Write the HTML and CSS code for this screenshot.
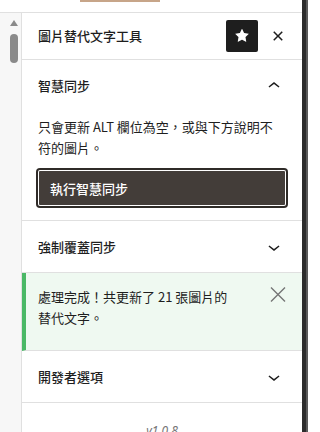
FILE: index.html
```html
<!DOCTYPE html>
<html lang="zh-Hant">
<head>
<meta charset="utf-8">
<title>圖片替代文字工具</title>
<link rel="stylesheet" href="styles.css">
</head>
<body>
<div class="app">
  <div class="left">
    <div class="topbar"><div class="tab-accent"></div></div>
    <div class="row">
      <div class="gutter">
        <div class="arrow"></div>
        <div class="thumb"></div>
      </div>
      <div class="panel">
        <div class="header">
          <h2 class="title">圖片替代文字工具</h2>
          <button class="icon-btn pinned" aria-label="固定">
            <svg width="24" height="24" viewBox="0 0 24 24"><path d="M11.776 4.454a.25.25 0 01.448 0l2.069 4.192a.25.25 0 00.188.137l4.626.672a.25.25 0 01.139.426l-3.348 3.263a.25.25 0 00-.072.222l.79 4.607a.25.25 0 01-.362.263l-4.138-2.175a.25.25 0 00-.232 0l-4.138 2.175a.25.25 0 01-.363-.263l.79-4.607a.25.25 0 00-.071-.222L4.754 9.881a.25.25 0 01.139-.426l4.626-.672a.25.25 0 00.188-.137l2.069-4.192z"/></svg>
          </button>
          <button class="icon-btn close" aria-label="關閉">
            <svg width="24" height="24" viewBox="0 0 24 24"><path d="M12 13.06l3.712 3.713 1.061-1.06L13.061 12l3.712-3.712-1.06-1.06L12 10.938 8.288 7.227l-1.061 1.06L10.939 12l-3.712 3.712 1.06 1.061L12 13.061z"/></svg>
          </button>
        </div>

        <section class="section">
          <div class="sec-head first">
            <span>智慧同步</span>
            <svg class="chev" width="24" height="24" viewBox="0 0 24 24"><path d="M6.5 12.4L12 8l5.5 4.4-.9 1.2L12 10l-4.6 3.6-.9-1.2z"/></svg>
          </div>
          <div class="sec-body">
            <p class="desc">只會更新 ALT 欄位為空，或與下方說明不符的圖片。</p>
            <button class="primary">執行智慧同步</button>
          </div>
        </section>

        <section class="section">
          <div class="sec-head">
            <span>強制覆蓋同步</span>
            <svg class="chev" width="24" height="24" viewBox="0 0 24 24"><path d="M17.5 11.6L12 16l-5.5-4.4.9-1.2L12 14l4.6-3.6.9 1.2z"/></svg>
          </div>
        </section>

        <div class="notice">
          <p class="notice-text">處理完成！共更新了 21 張圖片的替代文字。</p>
          <button class="dismiss" aria-label="關閉通知">
            <svg width="16" height="17" viewBox="0 0 16 17"><path d="M1 1.5L15 15.5M15 1.5L1 15.5" stroke="#757575" stroke-width="1.4" fill="none"/></svg>
          </button>
        </div>

        <section class="section">
          <div class="sec-head">
            <span>開發者選項</span>
            <svg class="chev" width="24" height="24" viewBox="0 0 24 24"><path d="M17.5 11.6L12 16l-5.5-4.4.9-1.2L12 14l4.6-3.6.9 1.2z"/></svg>
          </div>
        </section>

        <div class="footer">v1.0.8</div>
      </div>
    </div>
  </div>
  <div class="edge"></div>
</div>
</body>
</html>
```

FILE: styles.css
```css
* { box-sizing: border-box; }

html, body {
  margin: 0;
  padding: 0;
  height: 432px;
  overflow: hidden;
  background: #fff;
}

body {
  font-family: "Noto Sans CJK TC", "Noto Sans", sans-serif;
  font-size: 13px;
  color: #1e1e1e;
}

.app {
  display: flex;
  width: 308px;
  height: 432px;
}

.left {
  width: 302px;
  flex: none;
  display: flex;
  flex-direction: column;
}

.topbar {
  flex: none;
  height: 13px;
  border-bottom: 1px solid #e0e0e0;
  display: flex;
}

.tab-accent {
  margin-left: 80px;
  width: 80px;
  height: 2px;
  background: #c7a589;
}

.row {
  flex: 1;
  display: flex;
  min-height: 0;
  overflow: hidden;
}

.gutter {
  width: 22px;
  flex: none;
  background: #f7f7f7;
  border-right: 1px solid #e0e0e0;
  padding-left: 10px;
  padding-top: 7px;
  display: flex;
  flex-direction: column;
}

.arrow {
  flex: none;
  width: 0;
  height: 0;
  border-left: 4px solid transparent;
  border-right: 4px solid transparent;
  border-bottom: 6px solid #8a8a8a;
}

.thumb {
  flex: none;
  margin-top: 8px;
  width: 8px;
  height: 29px;
  border-radius: 4px;
  background: #8a8a8a;
}

.panel {
  width: 280px;
  flex: none;
  display: flex;
  flex-direction: column;
}

.panel > * { flex: none; }

.header {
  height: 47px;
  border-bottom: 1px solid #e0e0e0;
  display: flex;
  align-items: center;
  padding: 0 8px 0 16px;
  gap: 4px;
}

.title {
  flex: 1;
  margin: 0;
  font-size: 13px;
  font-weight: 500;
  line-height: 20px;
}

.icon-btn {
  width: 32px;
  height: 32px;
  border: 0;
  padding: 0;
  border-radius: 2px;
  background: transparent;
  display: flex;
  align-items: center;
  justify-content: center;
}

.icon-btn svg { fill: #1e1e1e; }

.pinned { background: #1e1e1e; }
.pinned svg { fill: #fff; width: 22px; height: 22px; }

.section {
  border-bottom: 1px solid #e0e0e0;
}

.sec-head {
  height: 51px;
  display: flex;
  align-items: center;
  justify-content: space-between;
  padding: 0 16px;
  font-weight: 500;
  line-height: 20px;
}

.sec-head.first { height: 52px; }

.chev { fill: #1e1e1e; flex: none; }

.sec-body {
  padding: 4px 16px 14px;
}

.desc {
  margin: 0;
  padding-right: 8px;
  line-height: 21px;
}

.primary {
  display: block;
  margin-top: 12px;
  width: 100%;
  height: 36px;
  border: 0;
  border-radius: 2px;
  background: #433d39;
  color: #fff;
  font-family: inherit;
  font-size: 13px;
  font-weight: 500;
  text-align: left;
  padding: 0 12px;
  box-shadow: inset 0 0 0 1px #fff, 0 0 0 2px #2f2b28;
}

.notice {
  display: flex;
  align-items: flex-start;
  background: #eff9f1;
  border-left: 4px solid #4ab866;
  border-bottom: 1px solid #e0e0e0;
  padding: 13px 12px 22px 12px;
}

.notice-text {
  margin: 0 auto 0 0;
  width: 200px;
  line-height: 21px;
}

.dismiss {
  margin-top: -4px;
  width: 24px;
  height: 24px;
  padding: 0;
  border: 0;
  background: transparent;
  display: flex;
  align-items: center;
  justify-content: center;
}

.footer {
  padding-top: 20px;
  text-align: center;
  font-family: "Noto Sans", sans-serif;
  font-style: italic;
  font-size: 12px;
  line-height: 16px;
  color: #757575;
}

.edge {
  width: 6px;
  flex: none;
  background: #2c2c2c;
  border-right: 2px solid #5a5a5a;
}
```
